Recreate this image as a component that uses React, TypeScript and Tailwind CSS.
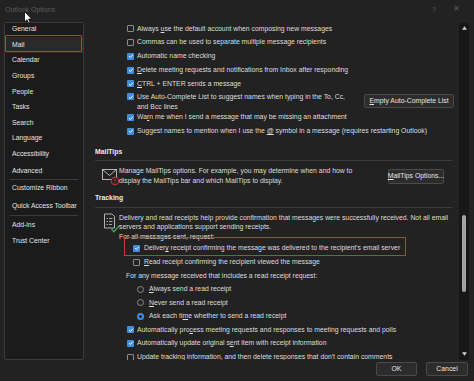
import React from 'react';

const navTop = ['General', 'Mail', 'Calendar', 'Groups', 'People', 'Tasks', 'Search', 'Language', 'Accessibility'];

const CheckBox = ({ checked }: { checked?: boolean }) =>
  checked ? (
    <span className="w-[7px] h-[7px] rounded-[1px] bg-[#3f8fdc] flex items-center justify-center shrink-0">
      <svg viewBox="0 0 8 8" className="w-[6px] h-[6px]">
        <path d="M1.4 4.2 L3.2 5.9 L6.6 2.2" stroke="white" strokeWidth="1.3" fill="none" />
      </svg>
    </span>
  ) : (
    <span className="w-[7px] h-[7px] rounded-[1px] border border-[#8c8c8c] shrink-0" />
  );

const Radio = ({ checked }: { checked?: boolean }) =>
  checked ? (
    <span className="w-[7px] h-[7px] rounded-full bg-[#3f8fdc] flex items-center justify-center shrink-0">
      <span className="w-[3px] h-[3px] rounded-full bg-[#1b1b1b]" />
    </span>
  ) : (
    <span className="w-[7px] h-[7px] rounded-full border border-[#8c8c8c] shrink-0" />
  );

const Row = ({ checked, children, h = 'h-[13.75px]' }: { checked?: boolean; children: React.ReactNode; h?: string }) => (
  <div className={`${h} flex items-center gap-[3px] ml-[32px]`}>
    <CheckBox checked={checked} />
    <span className="whitespace-nowrap">{children}</span>
  </div>
);

const Btn = ({ children, className = '' }: { children: React.ReactNode; className?: string }) => (
  <div
    className={`h-[14px] flex items-center justify-center bg-[#2c2c2c] border border-[#4a4a4a] rounded-[2px] text-[#e6e6e6] whitespace-nowrap ${className}`}
  >
    {children}
  </div>
);

const NavItem = ({ label, className = '' }: { label: string; className?: string }) => (
  <div className={`h-[15.6px] flex items-center pl-[7px] relative ${className}`}>
    {label}
    {label === 'Mail' && (
      <span className="absolute left-0 right-[1px] -top-[2px] h-[17px] border-[1.5px] border-[#d13438] rounded-[1px]" />
    )}
  </div>
);

export default function App() {
  return (
    <div className="w-[474px] h-[381px] bg-[#222222] relative overflow-hidden font-['Liberation_Sans',sans-serif] text-[6.85px] text-[#dedede] flex flex-col">
      {/* title bar */}
      <div className="h-[22px] flex items-start pt-[5px] pl-[5px] pr-[14px] text-[#5c5c5c] text-[7px]">
        <span>Outlook Options</span>
        <span className="ml-auto">?</span>
        <span className="ml-[17px] text-[8px] leading-[8px]">✕</span>
      </div>

      <div className="flex h-[338px]">
        <nav className="ml-[4px] w-[80px] border border-[#3c3c3c] bg-[#1b1b1b] rounded-[2px] text-[#e4e4e4] text-[6.8px]">
          <div className="-mt-[1.5px]">
            {navTop.map((n) => (
              <NavItem key={n} label={n} className={n === 'Mail' ? 'bg-[#2a2a2a]' : ''} />
            ))}
            <NavItem label="Advanced" className="mt-[1.5px]" />
            <div className="h-px bg-[#3a3a3a] mx-[5px] mt-[0.5px]" />
            <NavItem label="Customize Ribbon" />
            <NavItem label="Quick Access Toolbar" className="mt-[2px]" />
            <div className="h-px bg-[#3a3a3a] mx-[5px] mt-[1px]" />
            <NavItem label="Add-ins" className="mt-[2px]" />
            <NavItem label="Trust Center" />
          </div>
        </nav>

        <main className="flex-1 flex min-w-0">
          <div className="flex-1 pl-[11px] pr-[6px] overflow-hidden">
            <Row><span>Always <u>u</u>se the default account when composing new messages</span></Row>
            <Row>Commas can be used to separate multiple message recipients</Row>
            <Row checked>Automatic name checking</Row>
            <Row checked><u>D</u>elete meeting requests and notifications from Inbox after responding</Row>
            <Row checked><u>C</u>TRL + ENTER sends a message</Row>
            <div className="h-[20px] flex items-start ml-[32px] pt-[1px]">
              <div className="h-[10px] flex items-center">
                <CheckBox checked />
              </div>
              <div className="ml-[3px] leading-[10px]">
                Use Auto-Complete List to suggest names when typing in the To, Cc,
                <br />
                and Bcc lines
              </div>
              <Btn className="ml-auto self-center w-[90px] -mr-[1px]"><span><u>E</u>mpty Auto-Complete List</span></Btn>
            </div>
            <Row checked>Wa<u>r</u>n me when I send a message that may be missing an attachment</Row>
            <Row checked>Suggest names to mention when I use the <u>@</u> symbol in a message (requires restarting Outlook)</Row>

            {/* MailTips */}
            <div className="mt-[8px] h-[12px] flex items-center font-bold text-[#ececec]">MailTips</div>
            <div className="h-px bg-[#3a3a3a] mt-[2px]" />
            <div className="flex items-start mt-[5px]">
              <div className="w-[24px] pl-[6px] pt-[0.5px] shrink-0">
                <svg viewBox="0 0 20 19" className="w-[20px] h-[19px]">
                  <rect x="1.5" y="2.5" width="14" height="10" fill="none" stroke="#c4c4c4" strokeWidth="0.9" />
                  <path d="M1.5 2.5 L8.5 8.5 L15.5 2.5" fill="none" stroke="#c4c4c4" strokeWidth="0.9" />
                  <circle cx="14" cy="14" r="3.8" fill="#222" stroke="#d13438" strokeWidth="1" />
                  <path d="M14 11.8 V14.6" stroke="#d13438" strokeWidth="1" />
                  <circle cx="14" cy="16.1" r="0.55" fill="#d13438" />
                </svg>
              </div>
              <div className="leading-[9.5px]">
                Manage MailTips options. For example, you may determine when and how to
                <br />
                display the MailTips bar and which MailTips to display.
              </div>
              <Btn className="ml-auto mr-[9px] self-center w-[56px] h-[15px] mt-[1px]"><span><u>M</u>ailTips Options...</span></Btn>
            </div>

            {/* Tracking */}
            <div className="mt-[6px] h-[12px] flex items-center font-bold text-[#ececec]">Tracking</div>
            <div className="h-px bg-[#3a3a3a] mt-[3px]" />
            <div className="flex items-start mt-[5px]">
              <div className="w-[24px] pl-[8px] shrink-0">
                <svg viewBox="0 0 18 21" className="w-[18px] h-[21px]">
                  <path d="M1.5 1 H9 L11.5 3.5 V15 H1.5 Z" fill="none" stroke="#c4c4c4" strokeWidth="0.9" />
                  <path d="M3.5 5.5 H5 M6 5.5 H9.5 M3.5 8.5 H5 M6 8.5 H9.5 M3.5 11.5 H5 M6 11.5 H9" stroke="#c4c4c4" strokeWidth="0.8" />
                  <path d="M8.5 16 L11 18.8 L16.5 12.5" fill="none" stroke="#3fa34d" strokeWidth="1.3" />
                </svg>
              </div>
              <div className="leading-[9.5px] whitespace-nowrap">
                Delivery and read receipts help provide confirmation that messages were successfully received. Not all email
                <br />
                servers and applications support sending receipts.
                <br />
                For all messages sent, request:
              </div>
            </div>
            <div className="h-[14px] flex items-center gap-[4px] ml-[38px] relative">
              <CheckBox checked />
              <span className="whitespace-nowrap">Deliver<u>y</u> receipt confirming the message was delivered to the recipient's email server</span>
              <span className="absolute left-[-9px] top-[-4px] w-[282px] h-[19px] border-[1.5px] border-[#d13438]" />
            </div>
            <div className="h-[14px] flex items-center gap-[4px] ml-[38px]">
              <CheckBox />
              <span className="whitespace-nowrap"><u>R</u>ead receipt confirming the recipient viewed the message</span>
            </div>
            <div className="h-[12px] flex items-center ml-[31px] mt-[1px]">For any message received that includes a read receipt request:</div>
            {[
              [<><u>A</u>lways send a read receipt</>, false],
              [<><u>N</u>ever send a read receipt</>, false],
              [<>Ask each ti<u>m</u>e whether to send a read receipt</>, true],
            ].map(([label, on], i) => (
              <div key={i} className="h-[13.6px] flex items-center gap-[5px] ml-[42px]">
                <Radio checked={on as boolean} />
                <span className="whitespace-nowrap">{label as React.ReactNode}</span>
              </div>
            ))}
            <Row checked h="h-[13.6px]">Automatically pro<u>c</u>ess meeting requests and responses to meeting requests and polls</Row>
            <Row checked h="h-[13.6px]">Automatically update original s<u>e</u>nt item with receipt information</Row>
            <Row h="h-[13.6px]"><u>U</u>pdate tracking information, and then delete responses that don't contain comments</Row>
          </div>

          {/* scrollbar */}
          <div className="w-[10px] mr-[5px] mt-[1px] bg-[#171717] rounded-[2px] flex flex-col items-center">
            <svg viewBox="0 0 6 4" className="w-[5px] h-[4px] mt-[3px]">
              <path d="M3 0 L6 4 H0 Z" fill="#d0d0d0" />
            </svg>
            <div className="w-[4px] h-[77px] bg-[#a3a3a3] rounded-full mt-[185px]" />
            <svg viewBox="0 0 6 4" className="w-[5px] h-[4px] mt-auto mb-[4px]">
              <path d="M0 0 H6 L3 4 Z" fill="#d0d0d0" />
            </svg>
          </div>
        </main>
      </div>

      <div className="flex justify-end gap-[9px] pr-[6px] pt-[2px]">
        <Btn className="w-[41px]">OK</Btn>
        <Btn className="w-[42px]">Cancel</Btn>
      </div>

      {/* mouse pointer */}
      <svg viewBox="0 0 9 13" className="absolute left-[24px] top-[11px] w-[9px] h-[13px]">
        <path d="M0.5 0.5 V11 L3 8.7 L4.7 12.3 L6.2 11.6 L4.6 8.1 L7.8 8.1 Z" fill="white" stroke="black" strokeWidth="0.8" />
      </svg>
    </div>
  );
}
